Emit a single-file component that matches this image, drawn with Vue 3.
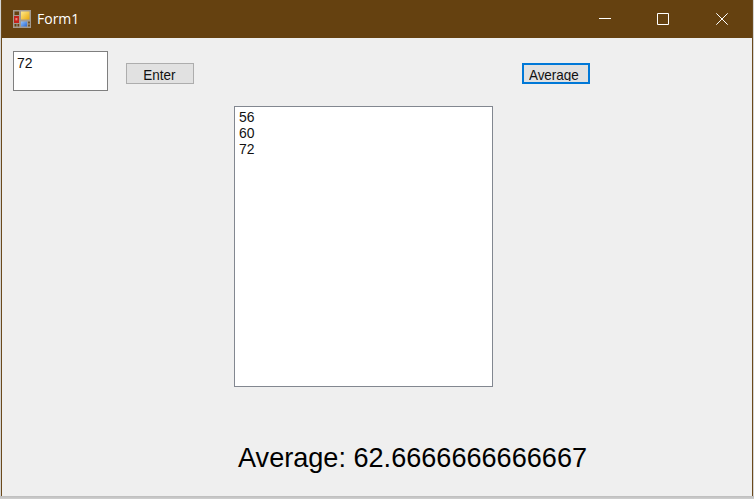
<script setup>
import { ref, computed } from 'vue'

const entry = ref('72')
const scores = ref([56, 60, 72])
const average = computed(() =>
  (scores.value.reduce((sum, n) => sum + n, 0) / scores.value.length).toFixed(13)
)
</script>

<template>
  <div class="desktop">
    <div class="window">
      <header class="titlebar">
        <svg class="app-icon" width="18" height="18" viewBox="0 0 18 18">
          <defs>
            <linearGradient id="gold" x1="0" y1="0" x2="1" y2="1">
              <stop offset="0" stop-color="#ffe98a" />
              <stop offset="1" stop-color="#e9a90c" />
            </linearGradient>
            <linearGradient id="blue" x1="0" y1="0" x2="1" y2="1">
              <stop offset="0" stop-color="#8fc0ff" />
              <stop offset="1" stop-color="#2c68cf" />
            </linearGradient>
          </defs>
          <rect width="18" height="18" fill="#a39b92" />
          <rect x="1.5" y="1.5" width="4.5" height="3.5" fill="#654110" />
          <rect x="1" y="6" width="5" height="7" fill="#c3221b" />
          <rect x="2.4" y="8" width="2" height="2.4" fill="#ee8077" />
          <rect x="1.5" y="14" width="2" height="2.5" fill="#654110" />
          <rect x="4.5" y="14" width="1.7" height="2.5" fill="#654110" />
          <rect x="8" y="1.5" width="8.5" height="8" fill="url(#gold)" />
          <rect x="8" y="11.5" width="6" height="5" fill="url(#blue)" />
          <rect x="15.2" y="11.5" width="1.6" height="2" fill="#654110" />
          <rect x="15.2" y="14.5" width="1.6" height="2" fill="#654110" />
        </svg>
        <span class="title">Form1</span>
        <div class="controls">
          <svg width="12" height="12" viewBox="0 0 12 12"><path d="M0 5.5H12" /></svg>
          <svg width="12" height="12" viewBox="0 0 12 12"><path d="M.5 .5H11.5V11.5H.5Z" /></svg>
          <svg width="12" height="12" viewBox="0 0 12 12"><path d="M.3 .3L11.7 11.7M11.7 .3L.3 11.7" /></svg>
        </div>
      </header>
      <main class="form">
        <div class="inputs">
          <div class="textbox"><span class="narrow">{{ entry }}</span></div>
          <button class="button enter"><span class="narrow">Enter</span></button>
          <button class="button average focused"><span class="narrow">Average</span></button>
        </div>
        <ul class="listbox">
          <li v-for="score in scores" :key="score"><span class="narrow">{{ score }}</span></li>
        </ul>
        <div class="result">Average: {{ average }}</div>
      </main>
    </div>
  </div>
</template>

<style>
body {
  margin: 0;
  overflow: hidden;
}
</style>

<style scoped>
.desktop {
  box-sizing: border-box;
  width: 754px;
  height: 499px;
  padding: 0 1px 3px;
  background: linear-gradient(#d4d4d4 0 496px, #bdbdbd 496px, #cfcfcf 499px);
  font-family: "Liberation Sans", Arial, sans-serif;
  color: #111;
}
.window {
  box-sizing: border-box;
  height: 496px;
  border: solid #6b4a1c;
  border-width: 0 1px;
  background: #efefef;
}
.titlebar {
  display: flex;
  align-items: center;
  height: 38px;
  padding: 0 24px 0 11px;
  background: #654110;
  color: #fff;
}
.title {
  margin-left: 6px;
  font: 14px/20px "Open Sans", "Noto Sans", sans-serif;
}
.controls {
  display: flex;
  gap: 46px;
  margin-left: auto;
}
.controls svg {
  display: block;
  fill: none;
  stroke: #fff;
  stroke-width: 1;
}
.controls svg:last-child {
  margin-left: 1px;
}
.form {
  padding: 13px 11px 0;
}
.inputs {
  display: flex;
  height: 40px;
}
.narrow {
  display: inline-block;
  transform: scaleX(0.93);
  transform-origin: left;
}
.textbox {
  box-sizing: border-box;
  width: 95px;
  height: 40px;
  padding: 3px;
  border: 1px solid #7f7f7f;
  background: #fff;
  font-size: 15px;
  line-height: 16px;
}
.button {
  box-sizing: border-box;
  display: flex;
  justify-content: center;
  width: 68px;
  height: 21px;
  margin: 12px 0 0;
  padding: 3px 2px 0 0;
  border: 1px solid #adadad;
  background: #e1e1e1;
  color: #111;
  font: 14.5px/17px "Liberation Sans", Arial, sans-serif;
  overflow: hidden;
}
.button .narrow {
  transform-origin: center;
}
.enter {
  margin-left: 18px;
}
.average {
  margin-left: 328px;
}
.average .narrow {
  height: 14px;
  margin-right: 3px;
  overflow: hidden;
}
.focused {
  padding-top: 2px;
  border: 2px solid #0078d7;
}
.listbox {
  box-sizing: border-box;
  width: 259px;
  height: 281px;
  margin: 15px 0 0 221px;
  padding: 2px 4px;
  border: 1px solid #828790;
  background: #fff;
  list-style: none;
  font-size: 15px;
  line-height: 16px;
}
.listbox li {
  height: 16px;
}
.result {
  margin: 55px 0 0 225px;
  color: #000;
  font-size: 27.1px;
  line-height: 32px;
  white-space: nowrap;
}
</style>
